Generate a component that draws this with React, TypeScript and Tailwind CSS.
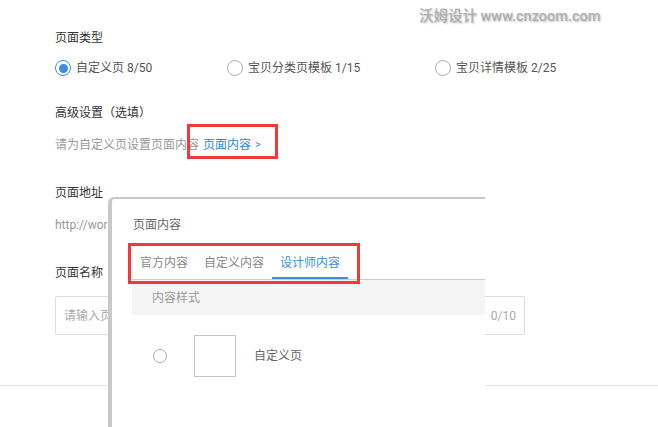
import React from 'react';

const font = { fontFamily: 'Roboto, "Noto Sans CJK SC", "Noto Sans", sans-serif' };

function Radio({ checked, label }: { checked?: boolean; label: string }) {
  return (
    <div className="flex items-center gap-[5px]">
      <span
        className={`flex h-4 w-4 items-center justify-center rounded-full border ${checked ? 'border-[#3a8ee6]' : 'border-[#aaaaaa]'}`}
      >
        {checked && <span className="h-[9px] w-[9px] rounded-full bg-[#3a8ee6]" />}
      </span>
      <span className="text-[12px] leading-5 text-[#555]">{label}</span>
    </div>
  );
}

function ContentPanel() {
  return (
    <div className="absolute left-[108px] top-[197px] h-[230px] w-[377px] rounded-tl-[6px] border-l-4 border-t-2 border-[#c8c8c8] bg-white">
      <div className="pl-[21px] pt-4 text-[12px] leading-5 text-[#666]">页面内容</div>

      <div className="relative ml-5 mt-3">
        {/* red annotation */}
        <div className="pointer-events-none absolute -left-1 -top-1 h-[41px] w-[232px] border-[3px] border-[#f03a3a]" />

        <div className="flex h-[33px] border-b border-[#cccccc] text-[12px]">
          <div className="flex h-8 items-center px-2 text-[#888]">官方内容</div>
          <div className="flex h-8 items-center px-2 text-[#888]">自定义内容</div>
          <div className="flex h-8 items-center border-b-2 border-[#3a8ee6] px-2 pt-[2px] text-[#3a8ee6]">设计师内容</div>
        </div>

        <div className="flex h-[35px] items-center bg-[#f5f5f5] pl-5 text-[12px] text-[#999]">内容样式</div>

        <div className="flex items-center pt-5">
          <span className="ml-[21px] h-[14px] w-[14px] rounded-full border border-[#aaaaaa]" />
          <span className="ml-[27px] h-[42px] w-[42px] border border-[#c4c4c4]" />
          <span className="ml-[18px] text-[12px] text-[#666]">自定义页</span>
        </div>
      </div>
    </div>
  );
}

export default function App() {
  return (
    <div className="relative h-[427px] w-[658px] overflow-hidden bg-white" style={font}>
      {/* watermark */}
      <div className="absolute left-[419px] top-[7px] whitespace-nowrap text-[14.5px] font-medium leading-5 text-[#b0b0b0] [text-shadow:1px_1px_2px_rgba(0,0,0,0.25)]">
        沃姆设计 www.cnzoom.com
      </div>

      <div className="pl-[55px] pt-[28px]">
        <div className="text-[12px] leading-5 text-[#333]">页面类型</div>

        <div className="mt-[10px] flex h-5 items-center">
          <div className="w-[172px]">
            <Radio checked label="自定义页 8/50" />
          </div>
          <div className="w-[208px]">
            <Radio label="宝贝分类页模板 1/15" />
          </div>
          <Radio label="宝贝详情模板 2/25" />
        </div>

        <div className="mt-[25px] text-[12px] leading-5 text-[#333]">高级设置（选填）</div>

        <div className="relative mt-3 flex items-center text-[12px] leading-5">
          <span className="text-[#999]">请为自定义页设置页面内容</span>
          <span className="relative ml-1 flex items-center text-[#2b85e4]">
            页面内容
            <span className="ml-[4px] text-[11px]">&gt;</span>
            <span className="pointer-events-none absolute -left-[16px] -top-[11px] h-[35px] w-[91px] border-[3px] border-[#f03a3a]" />
          </span>
        </div>

        <div className="mt-[28px] text-[12px] leading-5 text-[#333]">页面地址</div>
        <div className="mt-3 w-[52px] overflow-hidden whitespace-nowrap text-[12px] leading-5 text-[#999]">http://wordpage</div>

        <div className="mt-7 text-[12px] leading-5 text-[#333]">页面名称</div>
        <div className="mt-[13px] flex h-[39px] w-[470px] items-center justify-between rounded-[2px] border border-[#dddddd] pl-2 pr-2">
          <span className="text-[12px] text-[#aaa]">请输入页面名称</span>
          <span className="text-[12px] text-[#aaa]">0/10</span>
        </div>
      </div>

      <div className="mt-[50px] border-b border-[#e2e2e2]" />

      <ContentPanel />
    </div>
  );
}
